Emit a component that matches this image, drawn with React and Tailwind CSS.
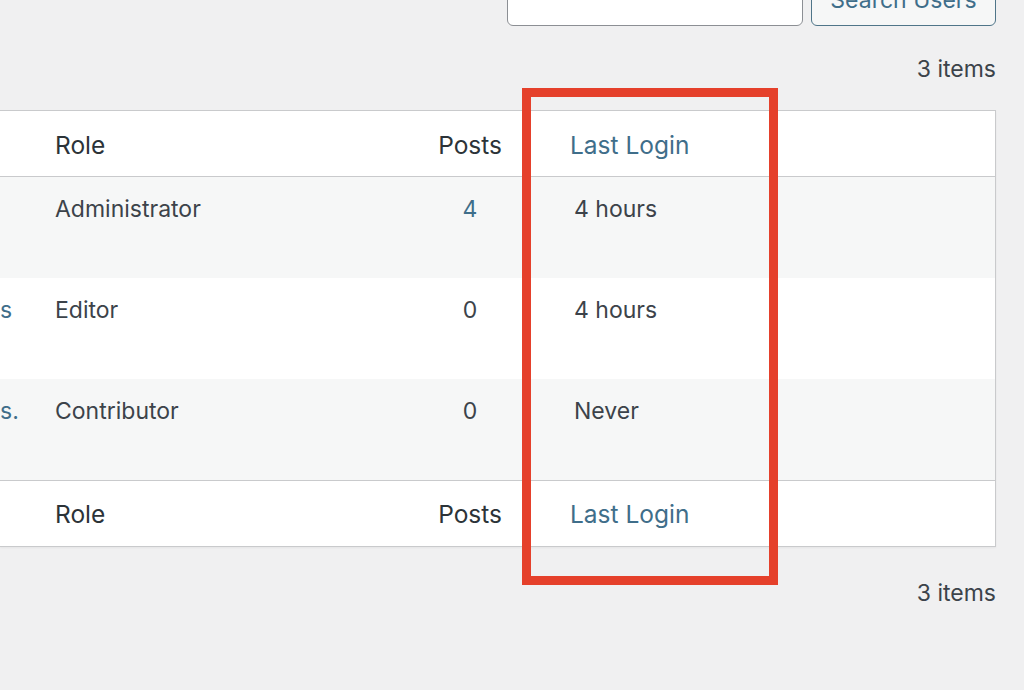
import React from "react";

const font = { fontFamily: "Inter, 'Liberation Sans', sans-serif" };

function Row({ bg, lead, leadDot, role, posts, postsLink, last }) {
  return (
    <div className={`flex h-[101px] ${bg}`}>
      <div className="w-[55px] pt-[18px] overflow-hidden">
        <span className="text-[#3f6e8a] whitespace-nowrap">{lead}{leadDot ? "." : ""}</span>
      </div>
      <div className="w-[353px] pt-[18px] text-[#3c434a]">{role}</div>
      <div className={`w-[124px] pt-[18px] text-center ${postsLink ? "text-[#3f6e8a]" : "text-[#3c434a]"}`}>{posts}</div>
      <div className="flex-1 pt-[18px] pl-[42px] text-[#3c434a]">{last}</div>
    </div>
  );
}

function HeadRow({ top }) {
  return (
    <div className={`flex h-[66px] items-center bg-white text-[24.5px] ${top ? "border-b pt-[2px]" : "border-t"} border-[#c9cacc]`}>
      <div className="w-[55px]" />
      <div className="w-[353px] text-[#2c3338]">Role</div>
      <div className="w-[124px] text-right pr-[30px] text-[#2c3338]">Posts</div>
      <div className="flex-1 pl-[38px] text-[#3f6e8a]">Last Login</div>
    </div>
  );
}

export default function App() {
  return (
    <div
      className="relative w-[1024px] h-[690px] overflow-hidden bg-[#f0f0f1] text-[23px] leading-[28px]"
      style={font}
    >
      {/* search bar */}
      <div className="flex justify-end gap-[8px] pr-[28px] -mt-[26px]">
        <div className="w-[296px] h-[52px] bg-white border border-[#8c8f94] rounded-[6px]" />
        <div className="w-[185px] h-[52px] bg-[#f6f7f7] border-[1.5px] border-[#4f7589] rounded-[6px] flex items-center justify-center text-[#3f6e8a]">
          Search Users
        </div>
      </div>

      <div className="flex justify-end pr-[28px] mt-[29px] text-[#3c434a]">3 items</div>

      <div className="mt-[27px] w-[996px] bg-white border-t border-r border-b border-[#c9cacc] shadow-[0_1px_2px_rgba(0,0,0,0.05)]">
        <HeadRow top />
        <Row bg="bg-[#f6f7f7]" lead="" role="Administrator" posts="4" postsLink last="4 hours" />
        <Row bg="bg-white" lead="s" role="Editor" posts="0" last="4 hours" />
        <Row bg="bg-[#f6f7f7]" lead="s" leadDot role="Contributor" posts="0" last="Never" />
        <HeadRow />
      </div>

      <div className="flex justify-end pr-[28px] mt-[32px] text-[#3c434a]">3 items</div>

      {/* red highlight annotation */}
      <div className="absolute left-[522px] top-[88px] w-[256px] h-[497px] border-[9px] border-[#e5402b]" />
    </div>
  );
}
